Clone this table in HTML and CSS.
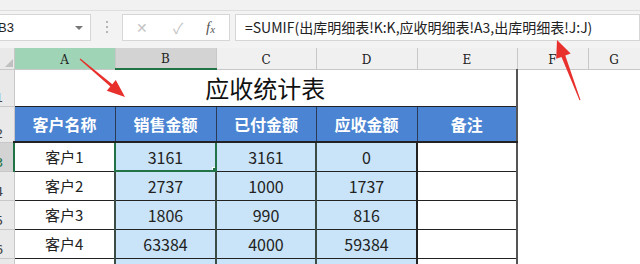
FILE: index.html
```html
<!DOCTYPE html>
<html>
<head>
<meta charset="utf-8">
<link rel="stylesheet" href="styles.css">
</head>
<body>
<div class="app">
  <div class="ribbon-edge"></div>
  <div class="fbar">
    <div class="namebox"><span class="nb-text">B3</span><span class="nb-arrow"></span></div>
    <div class="dots"><i></i><i></i><i></i></div>
    <div class="fbtns">
      <span class="btn-x">✕</span>
      <span class="btn-ok">✓</span>
      <span class="btn-fx">f<sub>x</sub></span>
    </div>
    <div class="finput">=SUMIF(出库明细表!K:K,应收明细表!A3,出库明细表!J:J)</div>
  </div>
  <table class="sheet">
    <colgroup>
      <col class="c-rh"><col class="c-a"><col class="c-b"><col class="c-c"><col class="c-d"><col class="c-e"><col class="c-f"><col class="c-g">
    </colgroup>
    <tr class="r-colhdr">
      <th class="corner"><span class="tri"></span></th>
      <th class="ch ch-a">A</th>
      <th class="ch ch-b">B</th>
      <th class="ch">C</th>
      <th class="ch">D</th>
      <th class="ch">E</th>
      <th class="ch">F</th>
      <th class="ch">G</th>
    </tr>
    <tr class="r-title">
      <th class="rh"><span>1</span></th>
      <td class="title" colspan="5">应收统计表</td>
      <td class="out"></td><td class="out"></td>
    </tr>
    <tr class="r-head">
      <th class="rh"><span>2</span></th>
      <td class="hd">客户名称</td>
      <td class="hd">销售金额</td>
      <td class="hd">已付金额</td>
      <td class="hd">应收金额</td>
      <td class="hd hd-last">备注</td>
      <td class="out"></td><td class="out"></td>
    </tr>
    <tr class="r-data">
      <th class="rh rh-sel"><span>3</span></th>
      <td class="name">客户1</td>
      <td class="num sel">3161<span class="handle"></span></td>
      <td class="num">3161</td>
      <td class="num">0</td>
      <td class="memo"></td>
      <td class="out"></td><td class="out"></td>
    </tr>
    <tr class="r-data">
      <th class="rh"><span>4</span></th>
      <td class="name">客户2</td>
      <td class="num">2737</td>
      <td class="num">1000</td>
      <td class="num">1737</td>
      <td class="memo"></td>
      <td class="out"></td><td class="out"></td>
    </tr>
    <tr class="r-data">
      <th class="rh"><span>5</span></th>
      <td class="name">客户3</td>
      <td class="num">1806</td>
      <td class="num">990</td>
      <td class="num">816</td>
      <td class="memo"></td>
      <td class="out"></td><td class="out"></td>
    </tr>
    <tr class="r-data">
      <th class="rh"><span>6</span></th>
      <td class="name">客户4</td>
      <td class="num">63384</td>
      <td class="num">4000</td>
      <td class="num">59384</td>
      <td class="memo"></td>
      <td class="out"></td><td class="out"></td>
    </tr>
    <tr class="r-data">
      <th class="rh"><span>7</span></th>
      <td class="name"></td>
      <td class="num"></td>
      <td class="num"></td>
      <td class="num"></td>
      <td class="memo"></td>
      <td class="out"></td><td class="out"></td>
    </tr>
  </table>
  <svg class="arrows" width="640" height="264" viewBox="0 0 640 264">
    <polygon points="79.6,59.4 110.3,86.5 106.8,90.7 125,97 115.8,80.1 112.3,84.3 80.4,58.6" fill="#e8302c"/>
    <polygon points="580.5,100 565.3,55.5 570.6,53.6 557,40 556.2,58.8 561.5,56.9 579.5,100.3" fill="#e8302c"/>
  </svg>
</div>
</body>
</html>
```
FILE: styles.css
```css
html, body {
  margin: 0;
  padding: 0;
  background: #fff;
}
.app {
  position: relative;
  width: 640px;
  height: 264px;
  overflow: hidden;
  font-family: "Noto Sans CJK SC", "Noto Sans", sans-serif;
}
.ribbon-edge {
  height: 10px;
  background: #f1f1f1;
  border-bottom: 1px solid #dedede;
}
.fbar {
  display: flex;
  align-items: center;
  height: 37px;
  background: #f3f3f3;
  box-sizing: border-box;
  padding: 2px 0 7px 0;
}
.namebox {
  position: relative;
  display: flex;
  align-items: center;
  width: 92px;
  height: 27px;
  margin-left: -1px;
  background: #fff;
  border: 1px solid #d6d6d6;
  box-sizing: border-box;
}
.nb-text {
  margin-left: -2px;
  font-family: "Liberation Sans", sans-serif;
  font-size: 13px;
  color: #222;
}
.nb-arrow {
  position: absolute;
  right: 7px;
  top: 11px;
  border-left: 4px solid transparent;
  border-right: 4px solid transparent;
  border-top: 4px solid #777;
}
.dots {
  display: flex;
  flex-direction: column;
  gap: 3px;
  width: 31px;
  align-items: center;
}
.dots i {
  display: block;
  width: 2px;
  height: 2px;
  background: #b5b5b5;
}
.fbtns {
  display: flex;
  align-items: center;
  width: 108px;
  height: 27px;
  background: #fff;
  border: 1px solid #d6d6d6;
  box-sizing: border-box;
  color: #c4c4c4;
}
.btn-x {
  width: 14px;
  margin-left: 12px;
  font-size: 14px;
  text-align: center;
}
.btn-ok {
  width: 14px;
  margin-left: 22px;
  font-size: 15px;
  text-align: center;
}
.btn-fx {
  margin-left: 21px;
  font-family: "Liberation Serif", serif;
  font-style: italic;
  font-size: 15px;
  color: #555;
}
.btn-fx sub {
  font-size: 11px;
  vertical-align: -1px;
}
.finput {
  flex: 1;
  height: 27px;
  margin-left: 5px;
  background: #fff;
  border: 1px solid #d6d6d6;
  box-sizing: border-box;
  padding-left: 9px;
  font-size: 14px;
  line-height: 25px;
  color: #222;
  white-space: nowrap;
}
.sheet {
  border-collapse: collapse;
  table-layout: fixed;
  width: 640px;
}
.c-rh { width: 14px; }
.c-a { width: 101px; }
.c-b { width: 101px; }
.c-c { width: 100px; }
.c-d { width: 101px; }
.c-e { width: 100px; }
.c-f { width: 71px; }
.c-g { width: 52px; }
.sheet td, .sheet th {
  padding: 0;
  overflow: hidden;
  white-space: nowrap;
}
.r-colhdr { height: 21px; }
.corner {
  position: relative;
  background: #e9e9e9;
  border-right: 1px solid #c8c8c8;
  border-bottom: 1px solid #c8c8c8;
}
.tri {
  position: absolute;
  right: 1px;
  bottom: 2px;
  border-left: 8px solid transparent;
  border-bottom: 8px solid #c0c0c0;
}
.ch {
  background: #f0f0f0;
  border-right: 1px solid #c8c8c8;
  border-bottom: 1px solid #c8c8c8;
  font-family: "DejaVu Serif", serif;
  font-weight: normal;
  font-size: 12px;
  color: #222;
  vertical-align: bottom;
  line-height: 18px;
}
.ch-a { background: #9fd4b6; }
.ch-b {
  background: #d3d3d3;
  border-bottom: 2px solid #217346;
}
.rh {
  background: #e9e9e9;
  border-right: 1px solid #c8c8c8;
  border-bottom: 1px solid #c8c8c8;
  text-align: left;
  vertical-align: bottom;
  font-family: "DejaVu Sans", sans-serif;
  font-weight: normal;
  font-size: 13px;
  color: #444;
  line-height: 15px;
}
.rh span { display: block; margin-left: -5px; padding-bottom: 1px; }
.rh-sel {
  background: #d3d3d3;
  color: #217346;
  border-right: 2px solid #217346;
}
.r-title { height: 37px; }
.title {
  text-align: center;
  font-size: 24px;
  color: #111;
  border-right: 2px solid #555;
  border-bottom: 1px solid #222;
  line-height: 30px;
  padding-top: 2px;
}
.out {
  border: none;
}
.r-head { height: 36px; }
.hd {
  background: #4a84d2;
  color: #fff;
  font-weight: bold;
  font-size: 16px;
  text-align: center;
  border-left: 1px solid #2b3a55;
  border-right: 1px solid #2b3a55;
  border-bottom: 2px solid #222;
}
.hd-last { border-right: 2px solid #555; }
.r-data { height: 29px; }
.name, .num, .memo {
  text-align: center;
  font-size: 15px;
  color: #222;
  border: 1px solid #222;
}
.name { background: #fff; }
.num { background: #c9e4f8; border-left: 2px solid #3b4b45; font-size: 16px; }
.memo { background: #fff; border-left: 2px solid #222; border-right: 2px solid #555; }
.sel {
  position: relative;
  border: 2px solid #217346;
  overflow: visible;
}
.handle {
  position: absolute;
  right: -4px;
  bottom: -4px;
  width: 5px;
  height: 5px;
  background: #217346;
  border: 1px solid #fff;
}
.arrows {
  position: absolute;
  left: 0;
  top: 0;
  pointer-events: none;
}
```
